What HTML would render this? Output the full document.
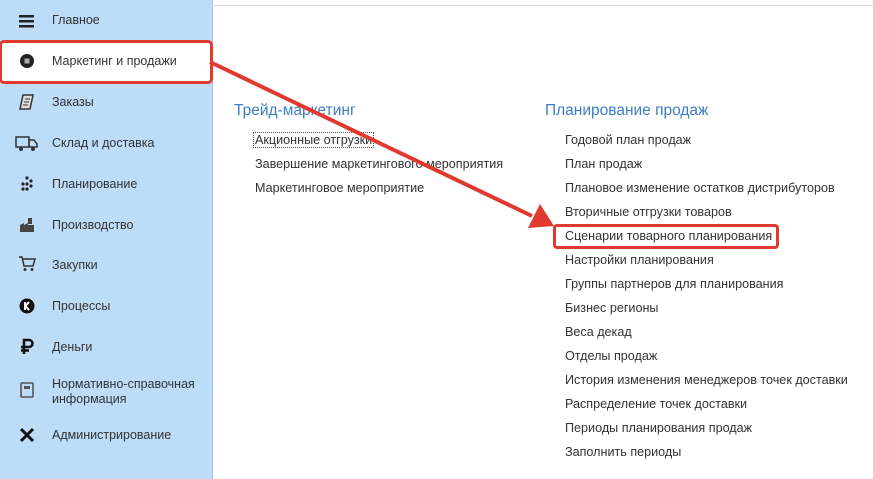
<!DOCTYPE html><html><head><meta charset="utf-8"><style>
body{margin:0;width:873px;height:479px;overflow:hidden;background:#fff;font-family:"Liberation Sans",sans-serif;position:relative}
#sb{position:absolute;left:0;top:0;width:212px;height:479px;background:#bcdcf7;border-right:1px solid #a9c6e0}
.it{position:absolute;left:52px;font-size:12.5px;color:#333}
.ic{position:absolute;left:18px;width:18px;height:18px}
#top{position:absolute;left:214px;top:5px;width:659px;height:1px;background:#d8d8d8}
.h{position:absolute;font-size:15.5px;color:#3b7dc4}
.l{position:absolute;font-size:12.6px;color:#333;white-space:nowrap}
</style></head><body>
<div id="sb">
<div class="it" style="top:13px">Главное</div>
<svg class="ic" style="top:12px" viewBox="0 0 18 18"><rect x="1" y="3" width="15" height="2.5" fill="#222"/><rect x="1" y="8" width="15" height="2.5" fill="#222"/><rect x="1" y="13" width="15" height="2.5" fill="#222"/></svg>
<div style="position:absolute;top:40px;width:208px;height:38px;background:#fff;border:3px solid #e03a30;border-radius:5px;box-sizing:content-box;left:-1px"></div>
<div class="it" style="top:54px">Маркетинг и продажи</div>
<svg class="ic" style="top:52px" viewBox="0 0 18 18"><circle cx="9" cy="9" r="7" fill="#222"/><rect x="6.5" y="6.5" width="5" height="5" fill="#aaa"/></svg>
<div class="it" style="top:95px">Заказы</div>
<svg class="ic" style="top:93px" viewBox="0 0 18 18"><path d="M5 2h10l-3 14H2z" fill="#ddd" stroke="#333" stroke-width="1.5"/><path d="M7 6h5M6 9h5M5 12h5" stroke="#333"/></svg>
<div class="it" style="top:136px">Склад и доставка</div>
<svg class="ic" style="top:134px;left:15px;width:24px" viewBox="0 0 24 18"><rect x="1" y="3" width="13" height="10" fill="none" stroke="#333" stroke-width="1.5"/><path d="M14 6h5l3 4v3h-8z" fill="none" stroke="#333" stroke-width="1.5"/><circle cx="6" cy="15" r="2" fill="#333"/><circle cx="18" cy="15" r="2" fill="#333"/></svg>
<div class="it" style="top:177px">Планирование</div>
<svg class="ic" style="top:175px" viewBox="0 0 18 18"><circle cx="9" cy="3" r="1.6" fill="#222"/><circle cx="13" cy="6" r="1.6" fill="#222"/><circle cx="13" cy="11" r="1.6" fill="#222"/><circle cx="9" cy="14" r="1.6" fill="#222"/><circle cx="5" cy="9" r="1.6" fill="#222"/><circle cx="5" cy="14" r="1.6" fill="#222"/><circle cx="9" cy="9" r="1.6" fill="#222"/></svg>
<div class="it" style="top:218px">Производство</div>
<svg class="ic" style="top:216px" viewBox="0 0 18 18"><path d="M2 16V9l4-2v2l4-2v2h6v7z" fill="#444"/><rect x="10" y="2" width="4" height="6" fill="#444"/></svg>
<div class="it" style="top:258px">Закупки</div>
<svg class="ic" style="top:255px" viewBox="0 0 18 18"><path d="M1 2h3l2 9h9l2-7H5" fill="none" stroke="#333" stroke-width="1.5"/><circle cx="7" cy="14.5" r="1.5" fill="#333"/><circle cx="14" cy="14.5" r="1.5" fill="#333"/></svg>
<div class="it" style="top:299px">Процессы</div>
<svg class="ic" style="top:297px" viewBox="0 0 18 18"><circle cx="9" cy="9" r="7.5" fill="#111"/><path d="M7 5v8M11 5L7.5 9l3.5 4" stroke="#fff" stroke-width="2" fill="none"/></svg>
<div class="it" style="top:340px">Деньги</div>
<svg class="ic" style="top:338px" viewBox="0 0 18 18"><path d="M6 16V2h5a3.5 3.5 0 010 7H3M3 12.5h8" stroke="#111" stroke-width="2.5" fill="none"/></svg>
<div class="it" style="top:377px;line-height:15px">Нормативно-справочная<br>информация</div>
<svg class="ic" style="top:381px" viewBox="0 0 18 18"><rect x="3" y="2" width="12" height="14" rx="1" fill="none" stroke="#555" stroke-width="1.6"/><rect x="6" y="5" width="6" height="3" fill="#555"/></svg>
<div class="it" style="top:428px">Администрирование</div>
<svg class="ic" style="top:426px" viewBox="0 0 18 18"><path d="M3 3l12 12M15 3L3 15" stroke="#111" stroke-width="3"/></svg>
</div>
<div id="top"></div>
<div class="h" style="left:234px;top:102px">Трейд-маркетинг</div>
<div class="l" style="left:253px;top:132px;border:1px dotted #555;padding:0 1px">Акционные отгрузки</div>
<div class="l" style="left:255px;top:157px">Завершение маркетингового мероприятия</div>
<div class="l" style="left:255px;top:181px">Маркетинговое мероприятие</div>
<div class="h" style="left:545px;top:102px">Планирование продаж</div>
<div style="position:absolute;left:553px;top:224px;width:220px;height:19px;border:3px solid #e03a30;border-radius:4px"></div>
<div class="l" style="left:565px;top:133px">Годовой план продаж</div>
<div class="l" style="left:565px;top:157px">План продаж</div>
<div class="l" style="left:565px;top:181px">Плановое изменение остатков дистрибуторов</div>
<div class="l" style="left:565px;top:205px">Вторичные отгрузки товаров</div>
<div class="l" style="left:565px;top:229px">Сценарии товарного планирования</div>
<div class="l" style="left:565px;top:253px">Настройки планирования</div>
<div class="l" style="left:565px;top:277px">Группы партнеров для планирования</div>
<div class="l" style="left:565px;top:301px">Бизнес регионы</div>
<div class="l" style="left:565px;top:325px">Веса декад</div>
<div class="l" style="left:565px;top:349px">Отделы продаж</div>
<div class="l" style="left:565px;top:373px">История изменения менеджеров точек доставки</div>
<div class="l" style="left:565px;top:397px">Распределение точек доставки</div>
<div class="l" style="left:565px;top:421px">Периоды планирования продаж</div>
<div class="l" style="left:565px;top:445px">Заполнить периоды</div>
<svg style="position:absolute;left:0;top:0" width="873" height="479"><line x1="210" y1="62" x2="532" y2="216" stroke="#e03a30" stroke-width="4"/><polygon points="554,226 528,228 540,204" fill="#e03a30"/></svg>
</body></html>
